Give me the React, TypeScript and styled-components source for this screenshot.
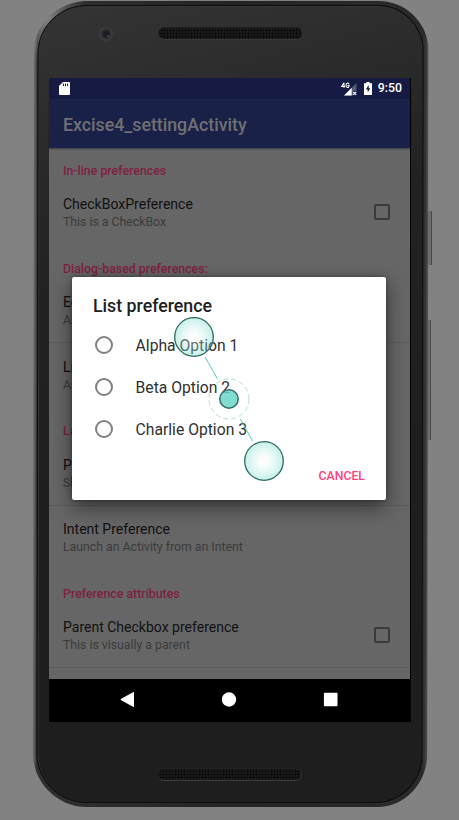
import React from 'react';
import styled, { createGlobalStyle } from 'styled-components';

const Global = createGlobalStyle`
  * { box-sizing: border-box; }
  html, body { margin: 0; padding: 0; background: #828282; overflow: hidden; }
`;

const Stage = styled.main`
  position: relative;
  width: 459px;
  height: 820px;
  padding: 1px 0 0 33px;
  background: #828282;
  font-family: Roboto, 'Liberation Sans', sans-serif;
  overflow: hidden;
`;

const Phone = styled.div`
  position: relative;
  z-index: 0;
  width: 395px;
  height: 806px;
  padding: 0 16px;
  display: flex;
  flex-direction: column;

  &::before, &::after {
    content: '';
    position: absolute;
    z-index: -1;
    transform: skewX(-0.09deg);
  }
  &::before {
    inset: 0;
    border-radius: 54px 50px 50px 54px / 52px 50px 54px 56px;
    background:
      radial-gradient(circle at 12px 18px, rgba(175,175,175,.65), rgba(130,130,130,0) 42px),
      linear-gradient(90deg, #747474 0, #595959 2px, #303030 4px, #242424 50%, #2a2a2a 390px, #3c3a3b 393px, #595959 395px);
  }
  &::after {
    inset: 4px 5px 4px 4px;
    border-radius: 49px 46px 47px 50px;
    border: 1.5px solid #0d0d0d;
    box-shadow: inset 1px 1px 0 #363636;
    background: linear-gradient(165deg, #343436 0, #2d2d2d 12%, #222 30%, #1e1e1f 60%, #1e1e1e 100%);
  }
`;

const TopBezel = styled.div`
  height: 77px;
  flex: none;
  display: flex;
  align-items: flex-start;
`;

const Camera = styled.svg`
  width: 16px;
  height: 16px;
  margin: 25px 0 0 49px;
`;

const Speaker = styled.div`
  width: 145px;
  height: 13px;
  flex: none;
  border-radius: 7px;
  background-color: #1b1b1b;
  background-image: radial-gradient(circle, #080808 .8px, transparent 1.3px);
  background-size: 3px 3px;
  background-position: 1px 1px;
  border: 1px solid #202020;
  border-bottom-color: #393939;
  border-right-color: #333;
`;

const Earpiece = styled(Speaker)`
  margin: 26px 0 0 44px;
`;

const BottomBezel = styled.div`
  padding: 46px 0 0 108px;
`;

const SideKey = styled.div<{ $top: number; $height: number; $width: number }>`
  position: absolute;
  left: 428px;
  top: ${p => p.$top}px;
  width: ${p => p.$width}px;
  height: ${p => p.$height}px;
  background: #6e6c6d;
  border-right: 1px solid #484848;
`;

const Screen = styled.section`
  position: relative;
  width: 362px;
  height: 644px;
  flex: none;
  display: flex;
  flex-direction: column;
  border-right: 1px solid #000;
  background: #666;
`;

const StatusBar = styled.header`
  height: 21px;
  flex: none;
  display: flex;
  align-items: center;
  padding: 0 8px 0 10px;
  background: #151b42;
  color: #fff;
`;

const StatusIcon = styled.svg<{ $w: number; $h: number; $gap?: number }>`
  width: ${p => p.$w}px;
  height: ${p => p.$h}px;
  margin-right: ${p => p.$gap ?? 0}px;
  flex: none;
`;

const Spacer = styled.div`
  flex: 1;
`;

const Clock = styled.span`
  font-size: 12.3px;
  line-height: 21px;
  font-weight: 500;
`;

const AppBar = styled.div`
  height: 49px;
  flex: none;
  position: relative;
  display: flex;
  align-items: center;
  padding: 2px 14px 0;
  background: #1a2149;
  box-shadow: 0 1px 2px rgba(0,0,0,.4);
  color: #6f7072;
  font-size: 17.75px;
  font-weight: 500;
`;

const List = styled.div`
  height: 531px;
  flex: none;
  overflow: hidden;
  font-size: 12.27px;
`;

const Category = styled.h2<{ $first?: boolean }>`
  height: ${p => (p.$first ? 32.5 : 34.5)}px;
  margin: 0;
  padding: ${p => (p.$first ? 15 : 17.3)}px 14px 0;
  font-size: 12.35px;
  line-height: 16px;
  font-weight: 500;
  color: #7f2142;
`;

const Row = styled.div<{ $divided?: boolean }>`
  height: ${p => (p.$divided ? 65 : 63)}px;
  display: flex;
  align-items: center;
  justify-content: space-between;
  padding: 0 20px 0 14px;
  border-bottom: ${p => (p.$divided ? 1 : 0)}px solid #5c5c5c;
`;

const RowText = styled.div`
  padding-top: 2px;
`;

const RowTitle = styled.div`
  font-size: 14.02px;
  line-height: 19px;
  color: #111;
`;

const Summary = styled.div`
  line-height: 17px;
  color: #3b3b3b;
`;

const Check = styled.span`
  width: 16px;
  height: 16px;
  border: 2px solid #3a3a3a;
  border-radius: 2px;
`;

const NavBar = styled.nav`
  height: 43px;
  flex: none;
  display: flex;
  align-items: center;
  justify-content: space-between;
  padding: 0 72px 2px 71px;
  background: #000;
`;

const NavIcon = styled.svg`
  width: 15px;
  height: 15px;
  fill: #fff;
`;

const Dialog = styled.section`
  position: absolute;
  left: 23px;
  top: 199px;
  width: 314px;
  height: 223px;
  padding: 18px 21px 0;
  background: #fff;
  border-radius: 2px;
  box-shadow: 0 7px 20px rgba(0,0,0,.5), 0 0 4px rgba(0,0,0,.35);
`;

const DialogTitle = styled.h1`
  margin: 0 0 7px;
  font-size: 17.75px;
  line-height: 22px;
  font-weight: 500;
  color: #212121;
`;

const Option = styled.div`
  height: 42.15px;
  display: flex;
  align-items: center;
  gap: 23px;
  padding-left: 1.6px;
  font-size: 15.7px;
  color: #303030;
`;

const Radio = styled.span`
  width: 18px;
  height: 18px;
  border: 2px solid #808080;
  border-radius: 50%;
`;

const Cancel = styled.button`
  display: block;
  margin: 18px 0 0 auto;
  padding: 0;
  border: 0;
  background: none;
  font: 500 12.27px/16px Roboto, sans-serif;
  color: #ff4081;
`;

const Gesture = styled.svg`
  position: absolute;
  left: 164px;
  top: 307px;
  width: 130px;
  height: 184px;
`;

const Pref = ({ title, summary, check, divided }: {
  title: string; summary: string; check?: boolean; divided?: boolean;
}) => (
  <Row $divided={divided}>
    <RowText>
      <RowTitle>{title}</RowTitle>
      <Summary>{summary}</Summary>
    </RowText>
    {check && <Check />}
  </Row>
);

export default function App() {
  return (
    <>
      <Global />
      <Stage>
        <SideKey $top={211} $height={54} $width={4} />
        <SideKey $top={320} $height={120} $width={3} />
        <Phone>
          <TopBezel>
            <Camera viewBox="0 0 16 16">
              <circle cx="8" cy="8" r="7.7" fill="#383838" />
              <circle cx="8" cy="8" r="4.7" fill="#29282d" />
              <circle cx="8.4" cy="8.3" r="2.7" fill="#1c1b25" />
              <circle cx="10" cy="10" r=".8" fill="#806160" />
            </Camera>
            <Earpiece />
          </TopBezel>
          <Screen>
            <StatusBar>
              <StatusIcon $w={11} $h={13} viewBox="0 0 11 13">
                <path d="M4 0h6q1 0 1 1v11q0 1-1 1H1q-1 0-1-1V4z" fill="#fff" />
                <path d="M4.4 1.5v2.6M6.5 1.5v2.6M8.6 1.5v2.6" stroke="#151b42" strokeWidth="1" />
              </StatusIcon>
              <Spacer />
              <StatusIcon $w={16} $h={14} $gap={7} viewBox="0 0 16 14">
                <path d="M15.5 1v8H12v4.5H3z" fill="#555a76" />
                <path d="M10.7 5.7v7.8H3z" fill="#fff" />
                <path d="M3 .8L.7 4.5h3.4M3 .8v5M8 1.8Q7.4 1 6.4 1 5 1.3 5 3.3t1.5 2.1Q8 5.4 8 4V3.4H6.6" fill="none" stroke="#fff" strokeWidth="1.1" />
                <path d="M12.2 9.9l3 3M15.2 9.9l-3 3" stroke="#fff" strokeWidth="1.2" />
              </StatusIcon>
              <StatusIcon $w={8} $h={13} $gap={6} viewBox="0 0 8 13">
                <path d="M2.4 0h3.2v1.2H8V13H0V1.2h2.4z" fill="#fff" />
                <path d="M4.7 3L1.8 7.4h1.9v3.2L6.3 6.2H4.7z" fill="#151b42" />
              </StatusIcon>
              <Clock>9:50</Clock>
            </StatusBar>
            <AppBar>Excise4_settingActivity</AppBar>
            <List>
              <Category $first>In-line preferences</Category>
              <Pref title="CheckBoxPreference" summary="This is a CheckBox" check />
              <Category>Dialog-based preferences:</Category>
              <Pref title="EditText preference" summary="An example that uses an edit text dialog" divided />
              <Pref title="List preference" summary="An example that uses a list dialog" />
              <Category>Launch preferences</Category>
              <Pref title="PreferenceScreen" summary="Show another screen of preferences" divided />
              <Pref title="Intent Preference" summary="Launch an Activity from an Intent" />
              <Category>Preference attributes</Category>
              <Pref title="Parent Checkbox preference" summary="This is visually a parent" check divided />
            </List>
            <NavBar>
              <NavIcon viewBox="0 0 15 15"><path d="M1.2 6.7L13 .2q1-.5 1 .4v13.8q0 .9-1 .4L1.2 8.3q-1-.8 0-1.6z" /></NavIcon>
              <NavIcon viewBox="0 0 15 15"><circle cx="7" cy="7.5" r="7.2" /></NavIcon>
              <NavIcon viewBox="0 0 15 15"><rect x=".9" y=".7" width="13.6" height="13.6" rx=".8" /></NavIcon>
            </NavBar>
            <Dialog>
              <DialogTitle>List preference</DialogTitle>
              {['Alpha Option 1', 'Beta Option 2', 'Charlie Option 3'].map(label => (
                <Option key={label}><Radio />{label}</Option>
              ))}
              <Cancel>CANCEL</Cancel>
            </Dialog>
          </Screen>
          <BottomBezel>
            <Speaker />
          </BottomBezel>
        </Phone>
        <Gesture viewBox="164 307 130 184">
          <defs>
            <radialGradient id="touch">
              <stop offset="0" stopColor="#fff" stopOpacity=".3" />
              <stop offset=".3" stopColor="#e2f8f4" stopOpacity=".32" />
              <stop offset="1" stopColor="#62d4c4" stopOpacity=".36" />
            </radialGradient>
          </defs>
          <path d="M205 357l12.5 22M240.5 419l12 22" stroke="#53cdbd" strokeWidth="1" />
          <circle cx="229" cy="399" r="20" fill="none" stroke="#b4ddd4" strokeWidth="1" strokeDasharray="5 3" />
          <circle cx="229" cy="399" r="9.2" fill="#68d6c8" fillOpacity=".83" stroke="#356e66" strokeWidth="1.5" />
          <circle cx="194" cy="337" r="19.3" fill="url(#touch)" stroke="#2b6a62" strokeWidth="1.3" />
          <circle cx="264" cy="461" r="19.3" fill="url(#touch)" stroke="#2b6a62" strokeWidth="1.3" />
        </Gesture>
      </Stage>
    </>
  );
}
